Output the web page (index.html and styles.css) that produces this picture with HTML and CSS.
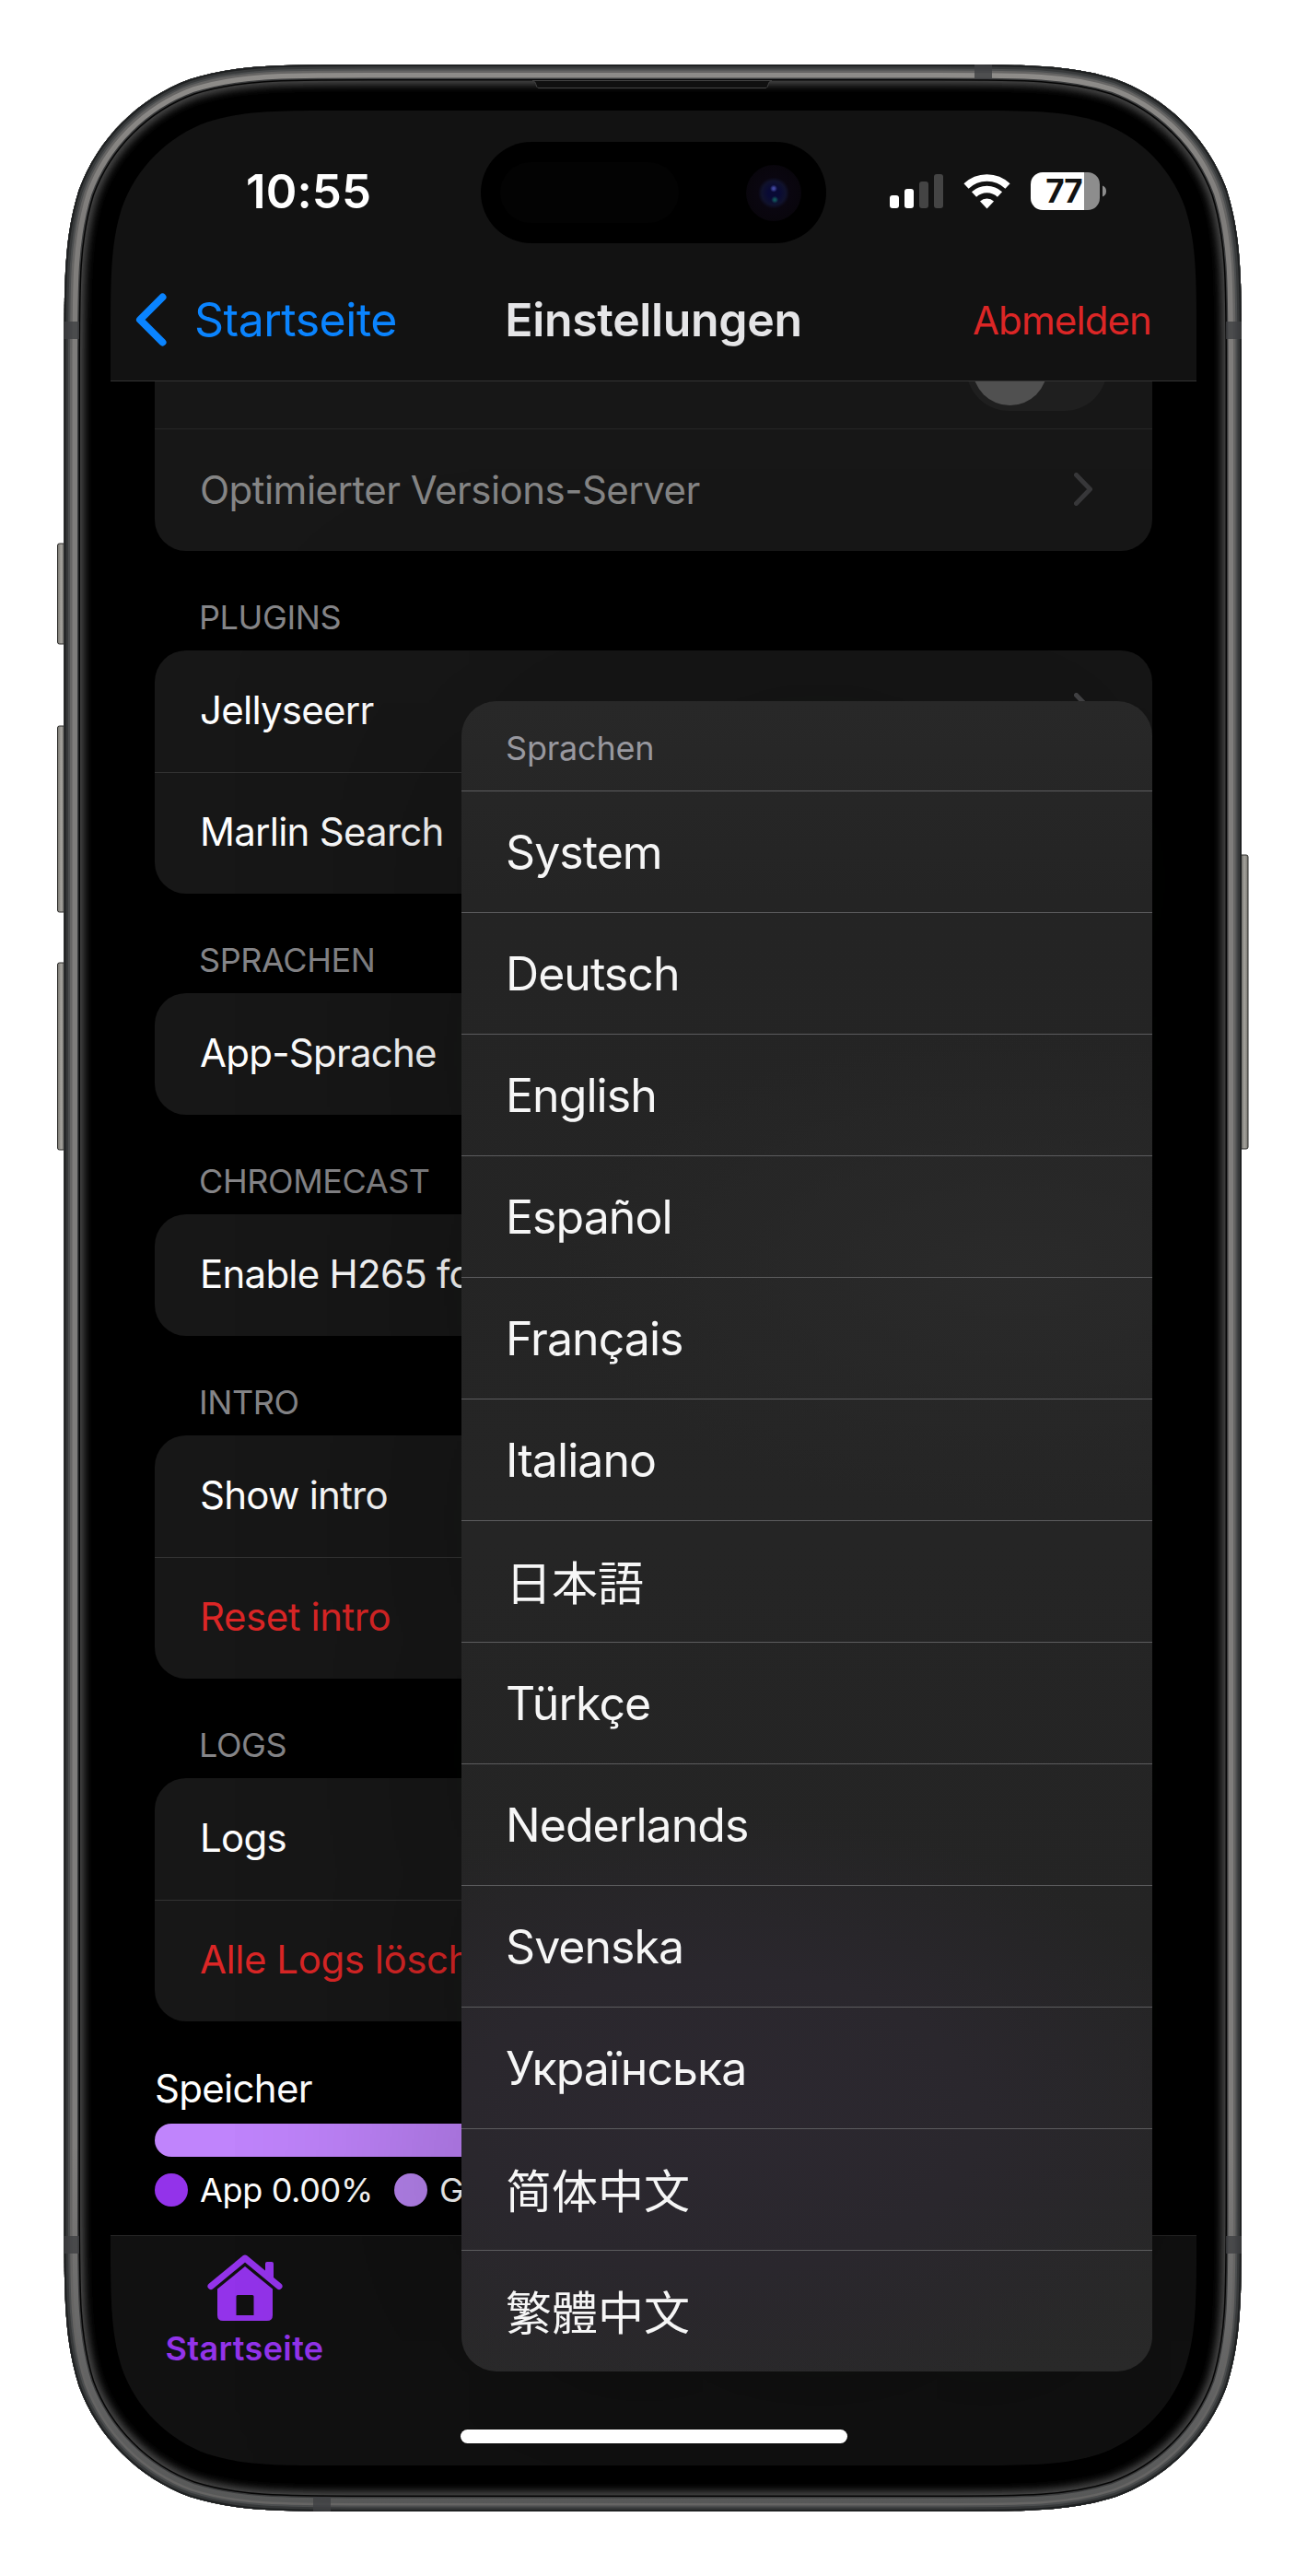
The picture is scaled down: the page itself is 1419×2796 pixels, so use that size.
FILE: index.html
```html
<!DOCTYPE html>
<html lang="de">
<head>
<meta charset="utf-8">
<title>Einstellungen</title>
<link rel="stylesheet" href="styles.css">
</head>
<body>
<div class="device">
  <svg class="frame" width="1419" height="2796" viewBox="0 0 1419 2796" aria-hidden="true">
    <defs>
      <path id="body" d="M399.5 70H1018C1113 70 1161 70 1211.5 86C1267.5 106.500 1311.500 150.500 1332 206.500C1348 257.500 1348 305 1348 400V2396C1348 2491 1348 2538.500 1332 2589.500C1311.500 2645.500 1267.500 2689.500 1211.500 2710C1161 2726 1113 2726 1018 2726H399.500C304.500 2726 257 2726 206 2710C150 2689.500 106 2645.500 85.500 2589.500C69.500 2538.500 69.500 2491 69.500 2396V400C69.500 305 69.500 257.500 85.500 206.500C106 150.500 150 106.500 206 86C257 70 304.500 70 399.500 70Z"/>
      <clipPath id="bodyClip"><use href="#body"/></clipPath>
      <linearGradient id="metal" x1="0" y1="0" x2="0" y2="1">
        <stop offset="0" stop-color="#8f8d8a"/><stop offset=".06" stop-color="#7f7d7b"/><stop offset=".85" stop-color="#7f7d7b"/><stop offset=".93" stop-color="#676767"/><stop offset="1" stop-color="#565757"/>
      </linearGradient>
      <linearGradient id="buttonL" x1="0" x2="1"><stop offset="0" stop-color="#77756f"/><stop offset=".4" stop-color="#a5a39d"/><stop offset="1" stop-color="#3a3a38"/></linearGradient>
      <linearGradient id="buttonR" x1="1" x2="0"><stop offset="0" stop-color="#77756f"/><stop offset=".4" stop-color="#a5a39d"/><stop offset="1" stop-color="#3a3a38"/></linearGradient>
      <filter id="soft" x="-5%" y="-5%" width="110%" height="110%"><feGaussianBlur stdDeviation="4"/></filter>
    </defs>
    <g fill="url(#buttonL)" stroke="#2c2c2a" stroke-width="1">
      <rect x="62.500" y="590" width="10" height="109" rx="2"/>
      <rect x="62.500" y="788" width="10" height="202" rx="2"/>
      <rect x="62.500" y="1045" width="10" height="203" rx="2"/>
    </g>
    <rect x="1345" y="928" width="10" height="319" rx="2" fill="url(#buttonR)" stroke="#2c2c2a"/>
    <g clip-path="url(#bodyClip)" fill="none">
      <use href="#body" fill="#000"/>
      <use href="#body" stroke="#484848" stroke-width="44" filter="url(#soft)"/>
      <use href="#body" stroke="#050505" stroke-width="35"/>
      <use href="#body" stroke="#3a3b3c" stroke-width="32"/>
      <use href="#body" stroke="url(#metal)" stroke-width="29"/>
      <use href="#body" stroke="#666564" stroke-width="18"/>
      <use href="#body" stroke="#4c4e4f" stroke-width="13"/>
      <use href="#body" stroke="#37393a" stroke-width="9"/>
      <use href="#body" stroke="#1f2122" stroke-width="4"/>
      <g fill="#3e4042" fill-opacity=".8">
        <rect x="69" y="349" width="17" height="19"/><rect x="1331" y="349" width="17" height="19"/>
        <rect x="69" y="2427" width="17" height="19"/><rect x="1331" y="2427" width="17" height="19"/>
        <rect x="1058" y="70" width="19" height="16"/><rect x="340" y="2710" width="19" height="16"/>
      </g>
      <path d="M578 87.500C583 88 581 95.500 585 95.500H831C835 95.500 833 88 838 87.500Z" fill="#101010" stroke="#454545"/>
    </g>
  </svg>

  <main class="screen">
    <header class="top">
      <div class="status">
        <span class="time">10:55</span>
        <div class="island"><i class="sensor"></i><i class="camera"></i></div>
        <svg class="status-icons" width="236" height="42" viewBox="0 0 236 42">
          <g fill="#fff"><rect x="0" y="25" width="10" height="14" rx="3"/><rect x="16" y="18" width="10" height="21" rx="3"/></g>
          <g fill="#444"><rect x="32" y="10" width="10" height="29" rx="3"/><rect x="48" y="2" width="10" height="37" rx="3"/></g>
          <g fill="none" stroke="#fff" stroke-width="7.500"><path d="M83 15A32.500 32.500 0 0 1 128 15"/><path d="M91.500 24A20.500 20.500 0 0 1 119.500 24"/></g>
          <path d="M98 31.500A11 11 0 0 1 113 31.500L105.500 39.500Z" fill="#fff"/>
          <path d="M211 0H166A13 13 0 0 0 153 13V28A13 13 0 0 0 166 41H211Z" fill="#fff"/>
          <path d="M211 0H215A13 13 0 0 1 228 13V28A13 13 0 0 1 215 41H211Z" fill="#8d8d8d"/>
          <path d="M231 14.500Q235 16 235 20.500T231 26.500Z" fill="#8d8d8d"/>
          <text x="189" y="33" class="battery-text" text-anchor="middle">77</text>
        </svg>
      </div>
      <nav class="nav">
        <a class="back"><svg width="34" height="58" viewBox="0 0 34 58"><path d="M29.500 4.500L5 29L29.500 53.500" fill="none" stroke="#0a84ff" stroke-width="8" stroke-linecap="round" stroke-linejoin="round"/></svg><span class="back-label">Startseite</span></a>
        <h1 class="title">Einstellungen</h1>
        <a class="logout">Abmelden</a>
      </nav>
    </header>

    <section class="content">
      <div class="card card-cut">
        <div class="row row-cut"><span class="toggle"><i></i></span></div>
        <div class="row muted"><span>Optimierter Versions-Server</span><svg class="chev" width="20" height="36" viewBox="0 0 20 36"><path d="M2.500 2.500L17.500 18L2.500 33.500"/></svg></div>
      </div>
      <h2>PLUGINS</h2>
      <div class="card">
        <div class="row"><span>Jellyseerr</span><svg class="chev" width="20" height="36" viewBox="0 0 20 36"><path d="M2.500 2.500L17.500 18L2.500 33.500"/></svg></div>
        <div class="row"><span>Marlin Search</span></div>
      </div>
      <h2>SPRACHEN</h2>
      <div class="card"><div class="row"><span>App-Sprache</span></div></div>
      <h2>CHROMECAST</h2>
      <div class="card"><div class="row"><span>Enable H265 for Chromecast</span></div></div>
      <h2>INTRO</h2>
      <div class="card">
        <div class="row"><span>Show intro</span></div>
        <div class="row danger"><span>Reset intro</span></div>
      </div>
      <h2>LOGS</h2>
      <div class="card">
        <div class="row"><span>Logs</span></div>
        <div class="row danger"><span>Alle Logs löschen</span></div>
      </div>
      <div class="storage">
        <span class="storage-title">Speicher</span>
        <div class="bar"></div>
        <div class="legend"><i class="dot app"></i><span class="l-app">App 0.00%</span><i class="dot dev"></i><span class="l-dev">G</span></div>
      </div>
    </section>

    <footer class="tabs">
      <a class="tab">
        <svg width="82" height="72" viewBox="0 0 82 72" fill="#9333ea"><path d="M4 34.500L41 4L78 34.500" fill="none" stroke="#9333ea" stroke-width="7" stroke-linecap="round" stroke-linejoin="round"/><path d="M63 24V10Q63 8 65 8H70Q72 8 72 10V31Z"/><path fill-rule="evenodd" d="M41 13L71 37.500V66Q71 72 65 72H17Q11 72 11 66V37.500ZM33 44Q31.500 44 31.500 45.500V66H50.500V45.500Q50.500 44 49 44Z"/></svg>
        <span class="tab-label">Startseite</span>
      </a>
    </footer>
    <i class="home-bar"></i>

    <div class="menu">
      <div class="menu-head">Sprachen</div>
      <div class="item">System</div>
      <div class="item">Deutsch</div>
      <div class="item">English</div>
      <div class="item">Español</div>
      <div class="item">Français</div>
      <div class="item">Italiano</div>
      <div class="item cjk" lang="ja">日本語</div>
      <div class="item">Türkçe</div>
      <div class="item">Nederlands</div>
      <div class="item">Svenska</div>
      <div class="item">Українська</div>
      <div class="item cjk" lang="zh-Hans">简体中文</div>
      <div class="item cjk trad" lang="zh-Hant">繁體中文</div>
    </div>
  </main>
</div>
</body>
</html>
```
FILE: styles.css
```css
* { box-sizing: border-box; }
body { margin: 0; background: #fff; font-family: Inter, "Noto Sans CJK SC", sans-serif; color: #fff; }
h1, h2 { margin: 0; font-weight: 400; }
.device { position: relative; width: 1419px; height: 2796px; padding: 120px; overflow: hidden; }
.frame { position: absolute; left: 0; top: 0; }

.screen {
  position: relative; display: flex; flex-direction: column;
  width: 1179px; height: 2556px; background: #000;
  clip-path: path("M253.500 0H925.500C998.500 0 1035 0 1074 12.500C1117 28 1151 62 1166.500 105C1179 144 1179 180.500 1179 253.500V2302.500C1179 2375.500 1179 2412 1166.500 2451C1151 2494 1117 2528 1074 2543.500C1035 2556 998.500 2556 925.500 2556H253.500C180.500 2556 144 2556 105 2543.500C62 2528 28 2494 12.500 2451C0 2412 0 2375.500 0 2302.500V253.500C0 180.500 0 144 12.500 105C28 62 62 28 105 12.500C144 0 180.500 0 253.500 0Z");
}

.top { height: 294px; background: #121212; border-bottom: 1px solid #343434; display: flex; flex-direction: column; position: relative; z-index: 1; }
.status { height: 177px; padding: 34px 97px 0 147px; display: grid; grid-template-columns: 255px 375px 1fr; align-items: start; }
.time { margin-top: 23px; font-size: 51px; line-height: 62px; font-weight: 600; letter-spacing: .1px; }
.island { width: 375px; height: 110px; border-radius: 55px; background: #000; display: flex; align-items: center; justify-content: space-between; padding: 0 27px 0 21px; }
.sensor { width: 194px; height: 66px; border-radius: 33px; background: #030303; }
.camera { width: 60px; height: 61px; border-radius: 50%; background: radial-gradient(circle at 50% 42%, #4147a0 0 1px, transparent 4px), radial-gradient(circle at 52% 62%, #11545a 0 1px, transparent 4px), radial-gradient(circle, #090a35 0 6px, #10122c 13px, #0a0610 17px, #070508 100%); }
.status-icons { justify-self: end; margin-top: 33px; }
.battery-text { font: 700 35px Inter, sans-serif; letter-spacing: -1px; fill: #121212; }

.nav { height: 116px; display: grid; grid-template-columns: 1fr auto 1fr; align-items: center; padding: 0 27px; margin-top: -8px; }
.back { display: flex; align-items: center; gap: 30px; color: #0a84ff; font-size: 50px; letter-spacing: -.5px; }
.title { font-size: 50px; font-weight: 600; color: #e5e5e7; letter-spacing: -.35px; }
.logout { justify-self: end; margin-right: 22px; font-size: 42px; letter-spacing: -.9px; color: #dc2626; }

.content { flex: none; height: 2012px; padding: 0 48px; overflow: hidden; }
.card { background: #171717; border-radius: 34px; overflow: hidden; }
.card-cut { border-radius: 0 0 34px 34px; }
.row { height: 132px; padding: 0 65px 4px 49px; display: flex; align-items: center; justify-content: space-between; font-size: 42px; letter-spacing: -.75px; white-space: nowrap; }
.row + .row { border-top: 1px solid #323232; }
.row-cut { height: 51px; padding: 0 49px; align-items: flex-end; justify-content: flex-end; }
.row-cut + .row { height: 133px; padding-bottom: 2px; border-color: #262626; letter-spacing: -.53px; }
.toggle { width: 153px; height: 93px; margin-bottom: 19px; border-radius: 47px; background: #1f1f1f; padding: 6px 7px; flex: none; }
.toggle i { display: block; width: 81px; height: 81px; border-radius: 50%; background: #505050; }
.muted { color: #858585; }
.row.danger { color: #dc2626; letter-spacing: -.45px; }
.chev { fill: none; stroke: #48484a; stroke-width: 5; stroke-linecap: round; stroke-linejoin: round; }
.muted .chev { stroke: #38383a; }
.content h2 { height: 108px; padding: 49px 49px 0 48px; font-size: 36px; line-height: 46px; letter-spacing: -.4px; color: #858588; }

.storage { padding-top: 46px; display: flex; flex-direction: column; }
.storage-title { font-size: 42px; line-height: 54px; letter-spacing: -.7px; }
.bar { height: 36px; margin-top: 11px; border-radius: 18px; background: #c084fc; }
.legend { display: flex; align-items: center; margin-top: 18px; height: 36px; font-size: 36px; letter-spacing: -.35px; white-space: nowrap; }
.dot { width: 36px; height: 36px; border-radius: 50%; margin-right: 13px; flex: none; }
.dot.app { background: #9333ea; }
.dot.dev { background: #b985f2; margin-left: 27px; }
.l-app { width: 184px; }

.tabs { flex: 1; background: #111; border-top: 1px solid #262626; padding: 20px 0 0 60px; }
.tab { display: flex; flex-direction: column; align-items: center; width: 171px; color: #9333ea; }
.tab-label { margin-top: 8px; font-size: 36px; line-height: 45px; font-weight: 600; letter-spacing: .35px; }
.home-bar { position: absolute; left: 380px; top: 2517px; width: 420px; height: 15px; border-radius: 8px; background: #fff; z-index: 2; }

.menu {
  position: absolute; left: 381px; top: 641px; width: 750px; height: 1813px; border-radius: 38px; overflow: hidden;
  background: radial-gradient(ellipse 560px 330px at 280px 1540px, #2c2830 0, #2a272d 50%, transparent 100%), radial-gradient(ellipse 500px 260px at 600px 620px, #2a2a2a, transparent), linear-gradient(#282828, #242424 12%, #252525 50%, #242424 75%, #292929);
  box-shadow: 0 0 260px rgba(0, 8, 0, .42);
}
.menu-head { height: 97px; padding: 4px 48px 0; display: flex; align-items: center; font-size: 36px; letter-spacing: -.2px; color: #98989f; }
.item { height: 132px; padding: 1px 48px 0; border-top: 1px solid #5c5c5e; display: flex; align-items: center; font-size: 50px; letter-spacing: -.95px; color: #f6f6f6; }
.cjk { padding: 0 48px 4px; letter-spacing: 0; font-family: "Noto Sans CJK SC", sans-serif; }
.cjk:lang(ja) { font-family: "Noto Sans CJK JP", sans-serif; }
.trad { font-family: "Noto Sans CJK TC", sans-serif; }
```
